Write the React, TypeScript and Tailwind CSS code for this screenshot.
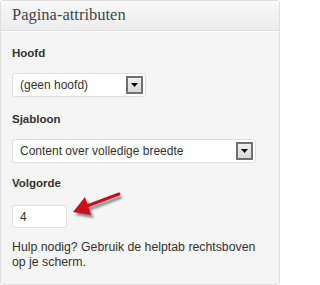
import React from "react";

function SelectArrow() {
  return (
    <span className="flex h-[18px] w-[17px] items-center justify-center border-2 border-[#707070] bg-gradient-to-b from-[#f0f0f0] to-[#d8d8d8]">
      <svg width="7" height="4" viewBox="0 0 7 4">
        <path d="M0 0 H7 L3.5 4 Z" fill="#000" />
      </svg>
    </span>
  );
}

function FakeSelect({ value, width }: { value: string; width: string }) {
  return (
    <div
      className={`flex h-[24px] ${width} items-center justify-between rounded-[3px] border border-[#dfdfdf] bg-white pl-[7px] pr-[2px]`}
    >
      <span className="text-[12px] leading-none text-[#333]">{value}</span>
      <SelectArrow />
    </div>
  );
}

export default function App() {
  return (
    <div
      className="relative h-[285px] w-[280px] overflow-hidden rounded-[3px] border border-[#dfdfdf] bg-[#f5f5f5]"
      style={{ fontFamily: '"Liberation Sans", Arial, sans-serif' }}
    >
      {/* header */}
      <div className="flex h-[30px] items-center border-b border-[#dfdfdf] bg-gradient-to-b from-[#f9f9f9] to-[#ececec] px-[11px]">
        <h3
          className="text-[16.5px] leading-none text-[#464646]"
          style={{ fontFamily: '"Liberation Serif", Georgia, serif' }}
        >
          Pagina-attributen
        </h3>
      </div>

      {/* body */}
      <div className="border-t border-white px-[11px] pt-[14px]">
        <p className="text-[11.5px] font-bold leading-[14px] text-[#333]">Hoofd</p>
        <div className="mt-[13px]">
          <FakeSelect value="(geen hoofd)" width="w-[134px]" />
        </div>

        <p className="mt-[15px] text-[11.5px] font-bold leading-[14px] text-[#333]">Sjabloon</p>
        <div className="mt-[13px]">
          <FakeSelect value="Content over volledige breedte" width="w-[244px]" />
        </div>

        <p className="mt-[13px] text-[11.5px] font-bold leading-[14px] text-[#333]">Volgorde</p>
        <div className="mt-[15px] flex h-[23px] w-[55px] items-center rounded-[3px] border border-[#dfdfdf] bg-white pl-[7px]">
          <span className="text-[12px] leading-none text-[#333]">4</span>
        </div>

        <p className="mt-[12px] text-[12.3px] leading-[15px] text-[#333]">
          Hulp nodig? Gebruik de helptab rechtsboven op je scherm.
        </p>
      </div>

      {/* annotation arrow */}
      <svg
        className="absolute left-[66px] top-[188px]"
        width="60"
        height="34"
        viewBox="0 0 60 34"
      >
        <defs>
          <filter id="sh" x="-20%" y="-40%" width="140%" height="180%">
            <feGaussianBlur stdDeviation="1.3" />
          </filter>
        </defs>
        <g transform="translate(2.5 3)" filter="url(#sh)" opacity="0.55">
          <line x1="52" y1="5" x2="20" y2="17" stroke="#333" strokeWidth="3" />
          <path d="M6 23 L18 8 L24 26 Z" fill="#333" />
        </g>
        <line x1="52" y1="5" x2="20" y2="17" stroke="#c8101a" strokeWidth="3" strokeLinecap="round" />
        <path d="M6 23 L18 8 L24 26 Z" fill="#c8101a" />
      </svg>
    </div>
  );
}
